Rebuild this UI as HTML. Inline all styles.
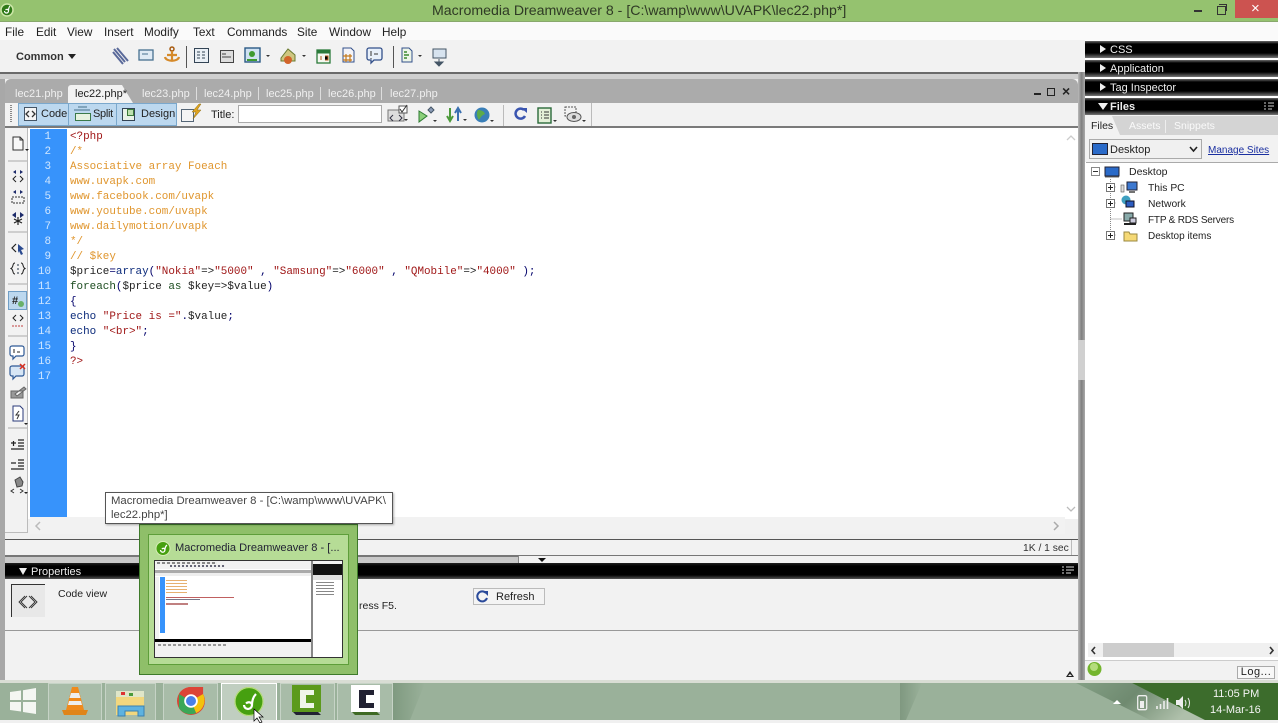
<!DOCTYPE html>
<html><head><meta charset="utf-8">
<style>
html,body{margin:0;padding:0;width:1278px;height:720px;overflow:hidden;background:#f0f0f0;font-family:"Liberation Sans",sans-serif;}
.a{position:absolute;white-space:nowrap;}
.t{position:absolute;white-space:nowrap;font-size:11.8px;line-height:14px;color:#222;}
#code{position:absolute;left:70px;top:130px;font-family:"Liberation Mono",monospace;font-size:10.93px;line-height:15px;white-space:pre;color:#00006a;}
#nums{position:absolute;left:30px;top:130px;width:21px;text-align:right;font-family:"Liberation Mono",monospace;font-size:10.93px;line-height:15px;color:#cfe6ff;white-space:pre;}
.o{color:#e0962e}.r{color:#a01818}.b{color:#0b2a7a}.k{color:#222}.g{color:#1d4d20}
.tab{position:absolute;top:87px;font-size:11px;line-height:14px;color:#efefef;}
.pn{position:absolute;left:1085px;width:193px;background:linear-gradient(#6a6a6a 0,#000 3px,#000 12px,#777 17px);height:17px;}
.pn span{position:absolute;left:25px;top:2px;font-size:11px;color:#eee;line-height:14px;}
.pn i{position:absolute;left:15px;top:4px;width:0;height:0;border-left:6px solid #eee;border-top:4.5px solid transparent;border-bottom:4.5px solid transparent}
svg{position:absolute;overflow:visible}
.tb{position:absolute;top:683px;height:37px;border:1px solid rgba(255,255,255,.35);border-bottom:0;background:rgba(255,255,255,.14);box-sizing:border-box}
</style></head><body>

<!-- title bar -->
<div class="a" style="left:0;top:0;width:1278px;height:21px;background:#95c26f"></div>
<div class="a" style="left:0;top:21px;width:1278px;height:1px;background:#88a86c"></div>
<svg style="left:0;top:0" width="16" height="20"><circle cx="7" cy="10" r="6" fill="#2f7a18" stroke="#cde6a8" stroke-width="1.500"/><path d="M4.500 11a2 2 0 1 0 4 0c0-2-2-2-3-1M8.500 11c0-3 .5-4 1.500-5" fill="none" stroke="#fff" stroke-width="1.200"/></svg>
<div class="a" style="left:432px;top:2px;font-size:14.170px;line-height:18px;color:#2f3a25;">Macromedia Dreamweaver 8 - [C:\wamp\www\UVAPK\lec22.php*]</div>
<div class="a" style="left:1194px;top:10px;width:8px;height:2px;background:#333"></div>
<div class="a" style="left:1217px;top:6px;width:7px;height:7px;border:1px solid #333;background:#95c26f"></div>
<div class="a" style="left:1219px;top:4px;width:7px;height:6px;border:1px solid #333;border-left:0;border-bottom:0"></div>
<div class="a" style="left:1235px;top:0;width:43px;height:18px;background:#cc5350"></div>
<div class="a" style="left:1251px;top:0;font-size:15px;line-height:17px;color:#fff;">×</div>

<!-- menu bar -->
<div class="a" style="left:0;top:22px;width:1278px;height:18px;background:#fafafa"></div>
<div class="t" style="left:5px;top:25px">File</div>
<div class="t" style="left:36px;top:25px">Edit</div>
<div class="t" style="left:67px;top:25px">View</div>
<div class="t" style="left:104px;top:25px">Insert</div>
<div class="t" style="left:144px;top:25px">Modify</div>
<div class="t" style="left:193px;top:25px">Text</div>
<div class="t" style="left:227px;top:25px">Commands</div>
<div class="t" style="left:297px;top:25px">Site</div>
<div class="t" style="left:329px;top:25px">Window</div>
<div class="t" style="left:382px;top:25px">Help</div>

<!-- insert bar -->
<div class="a" style="left:0;top:40px;width:1085px;height:32px;background:#f2f2f2"></div>
<div class="t" style="left:16px;top:50px;font-weight:bold;font-size:11px;color:#333">Common</div>
<div class="a" style="left:68px;top:54px;width:0;height:0;border-top:5px solid #222;border-left:4px solid transparent;border-right:4px solid transparent"></div>
<svg style="left:110px;top:44px" width="340" height="24">
<path d="M4 5l11 13M7 4l11 13M3 8l10 12" stroke="#5a6a9a" stroke-width="2" fill="none"/>
<rect x="29" y="6" width="14" height="10" fill="#dfeaf5" stroke="#47708f" stroke-width="1.300"/><path d="M32 10h6" stroke="#47708f"/>
<circle cx="62" cy="5" r="2" fill="none" stroke="#a85b10" stroke-width="1.500"/><path d="M62 7v10M57 11h10M55 13c1 5 13 5 14 0" stroke="#d68a2a" stroke-width="2.200" fill="none"/>
<path d="M76.500 2v22" stroke="#555"/>
<rect x="84.500" y="4.500" width="14" height="14" fill="#e9eff5" stroke="#345" /><path d="M87 8h3M92 8h3M87 11h3M92 11h3M87 14h3M92 14h3" stroke="#345"/>
<rect x="110.500" y="6.500" width="13" height="12" fill="#ddd" stroke="#444"/><path d="M112 10h4M112 13h9" stroke="#444"/>
<rect x="135" y="4" width="15" height="14" fill="#cfe2f2" stroke="#2c5a86" stroke-width="1.400"/><circle cx="142" cy="10" r="3" fill="#3c9a30"/><path d="M137 16h10" stroke="#3c9a30" stroke-width="2"/>
<path d="M156 11l2 2 2-2z" fill="#333"/>
<path d="M171 14l7-9 7 6v6h-14z" fill="#cfc680" stroke="#6a7a30"/><circle cx="178" cy="16" r="4" fill="#d2642a"/>
<path d="M192 11l2 2 2-2z" fill="#333"/>
<rect x="207" y="6" width="13" height="13" fill="#f5f8f0" stroke="#2a7a3a" stroke-width="1.300"/><path d="M207 8h13" stroke="#2a7a3a" stroke-width="3"/><path d="M211 12v4M215 12h3v4h-3" stroke="#b25a18"/>
<path d="M233 4h8l3 3v11h-11z" fill="#f3f3f8" stroke="#33508a"/><path d="M236 10v8M240 10v8M233 12h9M233 16h9" stroke="#c47a1c" stroke-width="1.200"/>
<path d="M259 4h11a2 2 0 0 1 2 2v8a2 2 0 0 1-2 2h-6l-3 3v-3h-2a2 2 0 0 1-2-2V6a2 2 0 0 1 2-2z" fill="#e8f0fa" stroke="#33508a" stroke-width="1.300"/><path d="M261 7v5M261 14v1M264 10h4" stroke="#333"/>
<path d="M283.500 2v22" stroke="#555"/>
<path d="M292 4h7l3 3v11h-10z" fill="#eef5e8" stroke="#33508a"/><path d="M294 8h3M294 11h5M294 14h3" stroke="#3c8a30" stroke-width="1.400"/>
<path d="M308 11l2 2 2-2z" fill="#333"/>
<rect x="323" y="5" width="13" height="9" fill="#d7e3ef" stroke="#456"/><path d="M329 15v3M325 18h8l-4 4z" fill="#456" stroke="#456"/>
</svg>

<!-- gray document chrome -->
<div class="a" style="left:0;top:72px;width:1085px;height:2px;background:#6a6a6a"></div>
<div class="a" style="left:0;top:74px;width:1085px;height:5px;background:#cfcfcf"></div>
<div class="a" style="left:5px;top:79px;width:1073px;height:24px;background:#ababab;border-radius:6px 6px 0 0"></div>
<div class="a" style="left:0;top:79px;width:5px;height:601px;background:#a8a8a8"></div>
<div class="a" style="left:1078px;top:72px;width:7px;height:608px;background:linear-gradient(90deg,#bbb,#7f7f7f 50%,#aaa)"></div>
<div class="a" style="left:1078px;top:340px;width:7px;height:40px;background:#d0d0d0"></div>

<!-- tabs -->
<svg style="left:68px;top:85px" width="70" height="18"><path d="M0 18V3a3 3 0 0 1 3-3h51l11 18z" fill="#f2f2f2"/></svg>
<div class="tab" style="left:15px">lec21.php</div>
<div class="tab" style="left:75px;color:#222">lec22.php*</div>
<div class="tab" style="left:142px">lec23.php</div>
<div class="tab" style="left:204px">lec24.php</div>
<div class="tab" style="left:266px">lec25.php</div>
<div class="tab" style="left:328px">lec26.php</div>
<div class="tab" style="left:390px">lec27.php</div>
<div class="a" style="left:196px;top:87px;width:1px;height:13px;background:#ddd"></div>
<div class="a" style="left:258px;top:87px;width:1px;height:13px;background:#ddd"></div>
<div class="a" style="left:320px;top:87px;width:1px;height:13px;background:#ddd"></div>
<div class="a" style="left:381px;top:87px;width:1px;height:13px;background:#ddd"></div>
<div class="a" style="left:1034px;top:93px;width:7px;height:2px;background:#222"></div>
<div class="a" style="left:1047px;top:88px;width:6px;height:6px;border:1px solid #222"></div>
<div class="a" style="left:1062px;top:84px;font-size:14px;font-weight:bold;line-height:14px;color:#222">×</div>

<!-- document toolbar -->
<div class="a" style="left:5px;top:103px;width:1073px;height:23px;background:#f2f2f2"></div>
<div class="a" style="left:5px;top:126px;width:1073px;height:2px;background:#7a7a7a"></div>
<div class="a" style="left:10px;top:105px;width:2px;height:17px;background:repeating-linear-gradient(#888 0 1px,transparent 1px 2px)"></div>
<div class="a" style="left:18px;top:103px;width:157px;height:21px;background:#bcd8ef;border:1px solid #7ba8cc"></div>
<div class="a" style="left:68px;top:104px;width:1px;height:21px;background:#7ba8cc"></div>
<div class="a" style="left:116px;top:104px;width:1px;height:21px;background:#7ba8cc"></div>
<svg style="left:0;top:103px" width="210" height="22">
<rect x="24.500" y="4.500" width="12" height="13" fill="#f5f5f5" stroke="#456"/><path d="M29 8l-3 3 3 3M32 8l3 3-3 3" fill="none" stroke="#333" stroke-width="1.300"/>
<rect x="75.500" y="10.500" width="15" height="7" fill="#e6f2e0" stroke="#3a7a4a"/><path d="M74 7h16M78 4h9" stroke="#46708a"/>
<rect x="122.500" y="5.500" width="12" height="12" fill="#e8f2e8" stroke="#345"/><rect x="127.500" y="6.500" width="6" height="6" fill="#bde0b0" stroke="#3a7a3a"/>
<rect x="181.500" y="6.500" width="12" height="12" fill="#f4f4f4" stroke="#567"/><path d="M199 1l-7 8h4l-3 7 8-9h-4l4-6z" fill="#e0a420" stroke="#8a6a10" stroke-width=".5"/>
</svg>
<div class="t" style="left:41px;top:107px;font-size:11px;color:#222">Code</div>
<div class="t" style="left:93px;top:107px;font-size:11px;color:#222;letter-spacing:-.3px">Split</div>
<div class="t" style="left:141px;top:107px;font-size:11px;color:#222">Design</div>
<div class="t" style="left:211px;top:108px;font-size:11px;color:#222">Title:</div>
<div class="a" style="left:238px;top:105px;width:142px;height:16px;background:#fff;border:1px solid #aaa"></div>
<svg style="left:385px;top:103px" width="210" height="24">
<rect x="3" y="7" width="16" height="11" fill="#ddd" stroke="#777"/><path d="M8 12l-3 3 3 3M14 12l3 3-3 3" fill="none" stroke="#334"/><rect x="14" y="3" width="8" height="7" fill="#fff" stroke="#555"/><path d="M15 6l2 3 5-7" stroke="#333" fill="none"/><path d="M19 16l2 2 2-2z" fill="#333"/>
<path d="M34 8l8 5-8 6z" fill="#8bd07a" stroke="#2d7a32"/><path d="M43 7l3-3 3 3-3 3z" fill="#8a9ab5" stroke="#456"/><path d="M48 17l2 2 2-2z" fill="#333"/>
<path d="M65 5v12M62 13l3 5 3-5" stroke="#4c9a3a" stroke-width="2" fill="none"/><path d="M73 18V6M70 10l3-5 3 5" stroke="#3a70b0" stroke-width="2" fill="none"/><path d="M78 16l2 2 2-2z" fill="#333"/>
<circle cx="97" cy="12" r="7.500" fill="#3a7fb8"/><path d="M93 7c3 0 6 1 7 4-3 1-5 4-6 6-2-3-3-7-1-10z" fill="#5cab4a"/><path d="M105 17l2 2 2-2z" fill="#333"/>
<path d="M118.500 2v21" stroke="#bbb"/>
<path d="M139 7a5 5 0 1 0 1 6" fill="none" stroke="#3a55b0" stroke-width="2.500"/><path d="M136 5l6 0 0 5z" fill="#3a55b0"/>
<rect x="153" y="5" width="13" height="15" fill="#e3f0d8" stroke="#2a6a3a" stroke-width="1.400"/><path d="M156 9h1M159 9h5M156 12h1M159 12h5M156 15h1M159 15h5" stroke="#333"/><path d="M168 17l2 2 2-2z" fill="#333"/>
<rect x="180" y="4" width="11" height="9" fill="none" stroke="#555" stroke-dasharray="2 1"/><ellipse cx="189" cy="14" rx="7" ry="4.500" fill="#ddd" stroke="#555"/><circle cx="189" cy="14" r="2" fill="#666"/><path d="M197 17l2 2 2-2z" fill="#333"/>
<path d="M206.500 0v23" stroke="#bbb"/>
</svg>

<!-- editor -->
<div class="a" style="left:5px;top:128px;width:1073px;height:391px;background:#fff"></div>
<div class="a" style="left:5px;top:128px;width:22px;height:404px;background:#f2f2f2;border-right:1px solid #bbb"></div>
<div class="a" style="left:5px;top:532px;width:23px;height:1px;background:#bbb"></div>
<div class="a" style="left:28px;top:128px;width:2px;height:389px;background:#fff"></div>
<div class="a" style="left:30px;top:129px;width:37px;height:388px;background:#3793fb"></div>
<div id="nums">1
2
3
4
5
6
7
8
9
10
11
12
13
14
15
16
17</div>
<div id="code"><span class="r">&lt;?php</span>
<span class="o">/*
Associative array Foeach
www.uvapk.com
www.facebook.com/uvapk
www.youtube.com/uvapk
www.dailymotion/uvapk
*/
// $key</span>
<span class="k">$price</span>=<span class="b">array</span>(<span class="r">"Nokia"</span><span class="k">=&gt;</span><span class="r">"5000"</span> , <span class="r">"Samsung"</span><span class="k">=&gt;</span><span class="r">"6000"</span> , <span class="r">"QMobile"</span><span class="k">=&gt;</span><span class="r">"4000"</span> );
<span class="g">foreach</span>(<span class="k">$price</span> <span class="g">as</span> <span class="k">$key=&gt;$value</span>)
{
<span class="b">echo</span> <span class="r">"Price is ="</span>.<span class="k">$value</span>;
<span class="b">echo</span> <span class="r">"&lt;br&gt;"</span>;
}
<span class="r">?&gt;</span></div>

<!-- coding toolbar icons -->
<svg style="left:5px;top:128px" width="26" height="375">
<path d="M8 9h7l3 3v10H8z" fill="#f8f8f8" stroke="#333"/><path d="M15 9v3h3" fill="none" stroke="#333"/><path d="M20 21l2 2 2-2z" fill="#222"/>
<path d="M3 33h19" stroke="#aaa"/>
<path d="M8 44l3-2v4zM18 44l-3-2v4z" fill="#1c2a6a"/><path d="M11 48l-3 3 3 3M15 48l3 3-3 3" stroke="#222" fill="none"/>
<path d="M8 64l3-2v4zM18 64l-3-2v4z" fill="#1c2a6a"/><rect x="7" y="69" width="12" height="6" fill="none" stroke="#333" stroke-dasharray="2 1"/>
<path d="M7 87l4-3v6zM19 87l-4-3v6z" fill="#1c2a6a"/><path d="M13 89v8M9 91l8 4M17 91l-8 4" stroke="#222" stroke-width="1.200"/>
<path d="M3 104h19" stroke="#aaa"/>
<path d="M11 116l-4 4 4 4" fill="none" stroke="#222" stroke-width="1.200"/><path d="M13 116l6 5-3 1 2 4-2 1-2-4-1 2z" fill="#2a4a90"/>
<path d="M10 135c-3 0-1 4-4 5.500 3 1.500 1 5.500 4 5.500M16 135c3 0 1 4 4 5.500-3 1.500-1 5.500-4 5.500" fill="none" stroke="#222"/><path d="M13 136v2M13 140v2M13 144v2" stroke="#234"/>
<path d="M3 156h19" stroke="#aaa"/>
<rect x="3.500" y="163.500" width="18" height="18" fill="#bcd8ef" stroke="#6f9ec6"/>
<text x="7" y="176" font-family="Liberation Sans" font-size="11" fill="#222" font-weight="bold">#</text><circle cx="16" cy="176" r="3" fill="#6ab06a"/>
<path d="M11 187l-3 3 3 3M15 187l3 3-3 3" fill="none" stroke="#222"/><path d="M7 198h12" stroke="#c04040" stroke-dasharray="2 1"/>
<path d="M3 208h19" stroke="#aaa"/>
<path d="M7 218h10a2 2 0 0 1 2 2v6a2 2 0 0 1-2 2h-6l-3 3v-3H7a2 2 0 0 1-2-2v-6a2 2 0 0 1 2-2z" fill="#fff" stroke="#2f5a96" stroke-width="1.200"/><path d="M9 221v4M12 224h3" stroke="#222"/>
<path d="M7 238h10a2 2 0 0 1 2 2v6a2 2 0 0 1-2 2h-6l-3 3v-3H7a2 2 0 0 1-2-2v-6a2 2 0 0 1 2-2z" fill="#d7e6f5" stroke="#2f5a96" stroke-width="1.200"/><path d="M15 236l5 5M20 236l-5 5" stroke="#d83020" stroke-width="1.500"/>
<path d="M6 270h12v-7H6zM10 266l9-7 2 2-9 7z" fill="#999" stroke="#666"/>
<path d="M8 278h7l3 3v12H8z" fill="#fff" stroke="#2a3a7a"/><path d="M14 283l-3 4h3l-2 4" fill="none" stroke="#333"/><path d="M19 295l2 2 2-2z" fill="#222"/>
<path d="M3 300h19" stroke="#aaa"/>
<path d="M6 315h5M8.500 313v5M13 312h6M13 315h6M13 318h6M6 321h13" stroke="#222" stroke-width="1.200"/>
<path d="M6 335h5M13 332h6M13 335h6M13 338h6M6 341h13" stroke="#222" stroke-width="1.200"/>
<path d="M10 352l5-3 3 5-1 4-5 1z" fill="#888" stroke="#444"/><path d="M9 361l-3 2 3 2M15 361l3 2-3 2" fill="none" stroke="#333"/><path d="M19 364l2 2 2-2z" fill="#222"/>
</svg>

<!-- bottom of editor -->
<div class="a" style="left:30px;top:517px;width:1035px;height:17px;background:#f2f2f2"></div>
<svg style="left:34px;top:521px" width="8" height="10"><path d="M6 1L2 5l4 4" fill="none" stroke="#bbb" stroke-width="1.500"/></svg>
<svg style="left:1052px;top:521px" width="8" height="10"><path d="M2 1l4 4-4 4" fill="none" stroke="#aaa" stroke-width="1.500"/></svg>
<svg style="left:1066px;top:134px" width="10" height="8"><path d="M1 6l4-4 4 4" fill="none" stroke="#ccc" stroke-width="1.300"/></svg>
<svg style="left:1066px;top:505px" width="10" height="8"><path d="M1 2l4 4 4-4" fill="none" stroke="#bbb" stroke-width="1.300"/></svg>
<div class="a" style="left:5px;top:539px;width:1073px;height:1px;background:#555"></div>
<div class="a" style="left:5px;top:540px;width:1073px;height:15px;background:#f2f2f2"></div>
<div class="a" style="left:1071px;top:540px;width:1px;height:15px;background:#bbb"></div>
<div class="a" style="left:1023px;top:542px;font-size:10.300px;line-height:13px;color:#333">1K / 1 sec</div>
<div class="a" style="left:5px;top:555px;width:1073px;height:2px;background:#777"></div>
<div class="a" style="left:5px;top:557px;width:1073px;height:6px;background:#c9c9c9"></div>
<div class="a" style="left:518px;top:556px;width:560px;height:7px;background:#f2f2f2;border-left:1px solid #888;box-sizing:border-box"></div>
<div class="a" style="left:538px;top:558px;width:0;height:0;border-top:4px solid #111;border-left:4px solid transparent;border-right:4px solid transparent"></div>

<!-- properties -->
<div class="a" style="left:5px;top:563px;width:1073px;height:16px;background:linear-gradient(#222 0,#000 3px,#000 12px,#555 16px)"></div>
<div class="a" style="left:19px;top:568px;width:0;height:0;border-top:7px solid #eee;border-left:4.500px solid transparent;border-right:4.500px solid transparent"></div>
<div class="a" style="left:31px;top:565px;font-size:11px;line-height:14px;color:#eee">Properties</div>
<svg style="left:1062px;top:566px" width="12" height="10"><path d="M0 1h2M4 1h8M0 4h2M4 4h8M0 7h2M4 7h5" stroke="#ddd"/></svg>
<div class="a" style="left:5px;top:579px;width:1073px;height:101px;background:#f2f2f2"></div>
<div class="a" style="left:5px;top:630px;width:1073px;height:1px;background:#999"></div>
<div class="a" style="left:11px;top:584px;width:33px;height:32px;background:#e8e8e8;border-left:1px solid #333;border-top:1px solid #333"></div>
<svg style="left:18px;top:595px" width="22" height="14"><path d="M7 1L1 7l6 6M9 1L3 7l6 6M13 1l6 6-6 6M11 1l6 6-6 6" stroke="#333" fill="none" stroke-width=".9"/></svg>
<div class="a" style="left:58px;top:588px;font-size:10.500px;line-height:13px;color:#222">Code view</div>
<div class="a" style="left:359px;top:600px;font-size:10.500px;line-height:13px;color:#222">ress F5.</div>
<div class="a" style="left:473px;top:588px;width:70px;height:15px;background:#f4f4f4;border:1px solid #bbb"></div>
<svg style="left:476px;top:590px" width="14" height="13"><path d="M10 3a5 5 0 1 0 1 5" fill="none" stroke="#2a4a9a" stroke-width="2"/><path d="M7 1l5 0 0 5z" fill="#2a4a9a"/></svg>
<div class="a" style="left:496px;top:590px;font-size:11px;line-height:14px;color:#222">Refresh</div>
<div class="a" style="left:1066px;top:671px;width:0;height:0;border-bottom:6px solid #222;border-left:4px solid transparent;border-right:4px solid transparent"></div>
<div class="a" style="left:1068px;top:674px;width:0;height:0;border-bottom:2px solid #f2f2f2;border-left:2px solid transparent;border-right:2px solid transparent"></div>

<!-- right panel -->
<div class="a" style="left:1085px;top:22px;width:193px;height:18px;background:#fafafa"></div>
<div class="a" style="left:1085px;top:40px;width:193px;height:640px;background:#fff"></div>
<div class="pn" style="top:41px"><i></i><span style="top:2px">CSS</span></div>
<div class="pn" style="top:60px"><i></i><span>Application</span></div>
<div class="pn" style="top:79px"><i></i><span>Tag Inspector</span></div>
<div class="pn" style="top:98px"><i style="left:13px;top:5px;border-left:5px solid transparent;border-right:5px solid transparent;border-top:7px solid #eee;border-bottom:0"></i><span style="font-weight:bold;font-size:11px">Files</span></div>
<svg style="left:1264px;top:102px" width="12" height="10"><path d="M0 1h2M4 1h6M0 4h2M4 4h6M0 7h2M4 7h4" stroke="#ccc"/></svg>
<div class="a" style="left:1085px;top:115px;width:193px;height:47px;background:#f2f2f2"></div>
<div class="a" style="left:1085px;top:116px;width:193px;height:19px;background:#d4d4d4"></div>
<svg style="left:1085px;top:116px" width="40" height="19"><path d="M0 19V0h27l8 19z" fill="#f2f2f2"/></svg>
<div class="a" style="left:1091px;top:119px;font-size:10.500px;line-height:14px;color:#222">Files</div>
<div class="a" style="left:1129px;top:119px;font-size:10.500px;line-height:14px;color:#fafafa;">Assets</div>
<div class="a" style="left:1174px;top:119px;font-size:10.500px;line-height:14px;color:#fafafa;">Snippets</div>
<div class="a" style="left:1165px;top:120px;width:1px;height:13px;background:#eee"></div>
<div class="a" style="left:1089px;top:139px;width:111px;height:18px;background:#f0f0f0;border:1px solid #aaa"></div>
<div class="a" style="left:1092px;top:143px;width:14px;height:10px;background:#2a6ac8;border:1px solid #223"></div>
<div class="a" style="left:1110px;top:143px;font-size:11px;line-height:14px;color:#222">Desktop</div>
<svg style="left:1189px;top:146px" width="10" height="7"><path d="M1 1l3.500 4L8 1" fill="none" stroke="#222" stroke-width="1.600"/></svg>
<div class="a" style="left:1208px;top:144px;font-size:10px;line-height:14px;color:#1a2fa0;text-decoration:underline">Manage Sites</div>
<div class="a" style="left:1086px;top:162px;width:192px;height:1px;background:#aaa"></div>

<svg style="left:1088px;top:164px" width="150" height="80">
<rect x="3.500" y="3.500" width="8" height="8" fill="#fff" stroke="#888"/><path d="M5 7.500h5" stroke="#333"/>
<rect x="17" y="3" width="14" height="9" fill="#2a6ac8" stroke="#223"/><path d="M17 13h14" stroke="#666"/>
<path d="M22.500 15v54M22.500 23h6M22.500 39h6M22.500 55h12M22.500 71h6" stroke="#888" stroke-dasharray="1 1"/>
<rect x="18.500" y="19.500" width="8" height="8" fill="#fff" stroke="#777"/><path d="M20 23.500h5M22.500 21v5" stroke="#222"/>
<rect x="18.500" y="35.500" width="8" height="8" fill="#fff" stroke="#777"/><path d="M20 39.500h5M22.500 37v5" stroke="#222"/>
<rect x="18.500" y="67.500" width="8" height="8" fill="#fff" stroke="#777"/><path d="M20 71.500h5M22.500 69v5" stroke="#222"/>
<rect x="39" y="18" width="10" height="8" fill="#3c78d0" stroke="#223"/><path d="M41 28h6" stroke="#444" stroke-width="1.500"/><rect x="33" y="21" width="3" height="7" fill="#ddd" stroke="#555" stroke-width=".6"/>
<circle cx="38" cy="36" r="4.500" fill="#3fa0c0"/><rect x="38" y="37" width="8" height="6" fill="#2c5cc0" stroke="#112"/>
<rect x="36" y="49" width="9" height="8" fill="#8aa" stroke="#222"/><path d="M36 60h12" stroke="#222" stroke-width="2"/><rect x="42" y="54" width="6" height="5" fill="#ccd" stroke="#222"/>
<path d="M36 68h5l1 2h7v7H36z" fill="#f5d976" stroke="#9a8840"/>
</svg>
<div class="a" style="left:1129px;top:166px;font-size:10.500px;line-height:13px;color:#222">Desktop</div>
<div class="a" style="left:1148px;top:182px;font-size:10.300px;line-height:13px;color:#222">This PC</div>
<div class="a" style="left:1148px;top:198px;font-size:10.300px;line-height:13px;color:#222">Network</div>
<div class="a" style="left:1148px;top:214px;font-size:10px;letter-spacing:-.2px;line-height:13px;color:#222">FTP &amp; RDS Servers</div>
<div class="a" style="left:1148px;top:230px;font-size:10px;line-height:13px;color:#222">Desktop items</div>

<div class="a" style="left:1088px;top:643px;width:190px;height:14px;background:#f0f0f0"></div>
<div class="a" style="left:1103px;top:643px;width:71px;height:14px;background:#cdcdcd"></div>
<svg style="left:1090px;top:646px" width="8" height="9"><path d="M5 1L2 4.500 5 8" fill="none" stroke="#333" stroke-width="1.600"/></svg>
<svg style="left:1268px;top:646px" width="8" height="9"><path d="M2 1l3 3.500L2 8" fill="none" stroke="#333" stroke-width="1.600"/></svg>
<div class="a" style="left:1085px;top:660px;width:193px;height:20px;background:#f2f2f2;border-top:1px solid #ccc;box-sizing:border-box"></div>
<svg style="left:1087px;top:661px" width="16" height="16"><circle cx="7.500" cy="8" r="7" fill="#74b52e"/><circle cx="7" cy="6" r="4" fill="#b4dc7c"/></svg>
<div class="a" style="left:1237px;top:666px;width:36px;height:11px;border:1px solid #aaa;background:#f8f8f8;font-size:11px;line-height:11px;text-align:center;color:#222;letter-spacing:.5px">Log...</div>

<!-- taskbar -->
<div class="a" style="left:0;top:680px;width:1278px;height:3px;background:#d9ddd4"></div>
<div class="a" style="left:0;top:683px;width:1278px;height:37px;background:#9ab19a"></div>
<svg style="left:0;top:683px" width="1278" height="37">
<defs>
<linearGradient id="g1" x1="0" y1="0" x2="1" y2="0"><stop offset="0" stop-color="#7f9a80"/><stop offset="1" stop-color="#9ab19a"/></linearGradient>
<linearGradient id="g3" x1="0" y1="0" x2="1" y2="0"><stop offset="0" stop-color="#7f9880"/><stop offset="1" stop-color="#9ab19a"/></linearGradient>
<linearGradient id="g2" x1="0" y1="0" x2="1" y2="0.300"><stop offset="0" stop-color="#84a085"/><stop offset=".5" stop-color="#6f8a70"/><stop offset="1" stop-color="#afc0ab"/></linearGradient>
</defs>
<path d="M393 0H425L410 37H393z" fill="url(#g1)"/>
<path d="M900 37V0H922L906 37z" fill="url(#g3)"/>
<path d="M1076 0H1132L1205 37H1150z" fill="url(#g2)"/>
<path d="M1132 0H1278V37H1205z" fill="#3c6c2c"/>
</svg>
<svg style="left:10px;top:688px" width="26" height="26"><path d="M0 4l11-1.500V12H0zM13 2.200L26 0v12H13zM0 14h11v9.500L0 22zM13 14h13v12l-13-2z" fill="#f4f6f2"/></svg>

<div class="tb" style="left:48px;width:54px"></div>
<div class="tb" style="left:105px;width:51px"></div>
<div class="tb" style="left:163px;width:55px"></div>
<div class="tb" style="left:221px;width:56px;background:rgba(255,255,255,.38);border-color:#fff"></div>
<div class="tb" style="left:280px;width:55px"></div>
<div class="tb" style="left:337px;width:56px"></div>

<svg style="left:61px;top:687px" width="28" height="28"><path d="M11 0h6l6 23H5z" fill="#f08a1c"/><path d="M10 6h8l1.500 5h-11zM8 14h12l1 4H7z" fill="#eee"/><path d="M1 23h26l-2 5H3z" fill="#e0851a"/></svg>
<svg style="left:116px;top:689px" width="30" height="27"><path d="M0 2h28v24H0z" fill="#f2d77e"/><path d="M0 2h28v6H0z" fill="#dfe6c9"/><rect x="5" y="3" width="4" height="3" fill="#d33"/><rect x="13" y="4" width="4" height="3" fill="#4a9a3a"/><path d="M2 17h26v10h-6v-5H9v5H2z" fill="#5db2e0" stroke="#3a80b0"/></svg>
<svg style="left:177px;top:687px" width="28" height="28"><circle cx="14" cy="14" r="14" fill="#dc4437"/><path d="M14 14L26.100 7a14 14 0 0 1-7 19.100z" fill="#f4c20d"/><path d="M14 14l5.100 12.100A14 14 0 0 1 1.900 21L1.900 7z" fill="#3aa757"/><path d="M1.900 7A14 14 0 0 1 14 0h12.100l0 7H14z" fill="#dc4437"/><circle cx="14" cy="14" r="6.800" fill="#fff"/><circle cx="14" cy="14" r="5" fill="#4a80e8"/></svg>
<svg style="left:234px;top:687px" width="30" height="30"><circle cx="15" cy="14.500" r="14.500" fill="#46a010"/><circle cx="15" cy="14.500" r="14" fill="none" stroke="#b7dd7c" stroke-width="1.200"/><path d="M10 18a4 4 0 1 0 8 0c0-3-4-3.500-6-1.500M18 18c0-5 1-8 4-11" fill="none" stroke="#fff" stroke-width="2.200"/></svg>
<svg style="left:292px;top:685px" width="32" height="30"><rect width="29" height="27" x="0" y="0" fill="#5c9a1c"/><path d="M1 27h25l3 3H4z" fill="#223"/><path d="M8 5h14v5h-8v8h8v5H8z" fill="#fff" opacity=".9"/></svg>
<svg style="left:351px;top:685px" width="32" height="30"><rect width="29" height="27" x="0" y="0" fill="#fff"/><path d="M1 27h25l3 3H4z" fill="#3f6a24"/><path d="M8 5h15v5h-8v8h8v5H8z" fill="#223"/></svg>
<svg style="left:253px;top:709px" width="12" height="14"><path d="M1 0v12l3-3 3 5 2-1-3-5h4z" fill="#fff" stroke="#000" stroke-width=".7"/></svg>

<!-- tray -->
<div class="a" style="left:1113px;top:700px;width:0;height:0;border-bottom:4px solid #fff;border-left:4px solid transparent;border-right:4px solid transparent"></div>
<svg style="left:1137px;top:695px" width="56" height="16"><rect x=".7" y=".7" width="9" height="14" rx="1.500" fill="none" stroke="#eee" stroke-width="1.300"/><rect x="3" y="6" width="4" height="7" fill="#eee"/><path d="M20 11v3M23.500 9v5M27 6v8M30.500 3v11" stroke="#eee" stroke-width="1.600"/><path d="M39 5h3l4-4v13l-4-4h-3z" fill="#eee"/><path d="M48 5c1.300 2 1.300 4 0 6M51 3c2 3 2 7 0 10" stroke="#eee" fill="none"/></svg>
<div class="a" style="left:1213px;top:687px;font-size:11px;line-height:15px;color:#f4f4f4">11:05 PM</div>
<div class="a" style="left:1210px;top:703px;font-size:11px;line-height:15px;color:#f4f4f4">14-Mar-16</div>

<!-- taskbar thumbnail popup -->
<div class="a" style="left:139px;top:524px;width:219px;height:151px;background:#8fbf69;border:1px solid #3e7a2a;box-sizing:border-box"></div>
<div class="a" style="left:148px;top:534px;width:201px;height:131px;background:#b6dc96;border:1px solid #5e9e3a;box-sizing:border-box"></div>
<svg style="left:155px;top:540px" width="17" height="17"><circle cx="8" cy="8.500" r="7" fill="#46a010" stroke="#d8eeb8"/><path d="M5.500 10a2.200 2.200 0 1 0 4.400 0c0-2-2-2-3-1M9.900 10c0-2 .5-3.500 2-5" fill="none" stroke="#fff" stroke-width="1.300"/></svg>
<div class="a" style="left:175px;top:541px;font-size:11.100px;line-height:14px;color:#223">Macromedia Dreamweaver 8 - [...</div>
<div class="a" style="left:154px;top:560px;width:189px;height:98px;background:#fff;border:1px solid #333;box-sizing:border-box;overflow:hidden">
 <div class="a" style="left:0;top:0;width:187px;height:8px;background:#f2f2f2"></div>
 <div class="a" style="left:2px;top:1px;width:60px;height:2px;background:repeating-linear-gradient(90deg,#888 0 3px,#eee 3px 5px)"></div>
 <div class="a" style="left:15px;top:4px;width:55px;height:2px;background:repeating-linear-gradient(90deg,#667 0 2px,#eee 2px 4px)"></div>
 <div class="a" style="left:0;top:9px;width:157px;height:3px;background:#aaa"></div>
 <div class="a" style="left:0;top:12px;width:157px;height:3px;background:#eee"></div>
 <div class="a" style="left:0;top:16px;width:4px;height:62px;background:#f2f2f2"></div>
 <div class="a" style="left:5px;top:16px;width:5px;height:56px;background:#3793fb"></div>
 <div class="a" style="left:11px;top:19px;width:21px;height:14px;background:repeating-linear-gradient(#e6b070 0 1px,#fff 1px 3px)"></div>
 <div class="a" style="left:11px;top:36px;width:68px;height:1px;background:#c06060"></div>
 <div class="a" style="left:11px;top:38px;width:34px;height:1px;background:#778"></div>
 <div class="a" style="left:11px;top:42px;width:22px;height:2px;background:#c08080"></div>
 <div class="a" style="left:0;top:78px;width:157px;height:3px;background:#000"></div>
 <div class="a" style="left:0;top:81px;width:157px;height:15px;background:#f2f2f2"></div>
 <div class="a" style="left:3px;top:83px;width:70px;height:2px;background:repeating-linear-gradient(90deg,#999 0 3px,#f2f2f2 3px 5px)"></div>
 <div class="a" style="left:156px;top:0;width:2px;height:96px;background:#888"></div>
 <div class="a" style="left:158px;top:3px;width:29px;height:11px;background:#111"></div>
 <div class="a" style="left:158px;top:14px;width:29px;height:5px;background:#e0e0e0"></div>
 <div class="a" style="left:161px;top:21px;width:18px;height:14px;background:repeating-linear-gradient(#888 0 1px,#fff 1px 3px)"></div>
</div>

<!-- tooltip -->
<div class="a" style="left:105px;top:492px;width:288px;height:32px;background:#fff;border:1px solid #555;box-sizing:border-box;box-shadow:1px 1px 2px rgba(0,0,0,.3)"></div>
<div class="a" style="left:111px;top:494px;font-size:11.330px;line-height:14px;color:#444">Macromedia Dreamweaver 8 - [C:\wamp\www\UVAPK\<br>lec22.php*]</div>

</body></html>
